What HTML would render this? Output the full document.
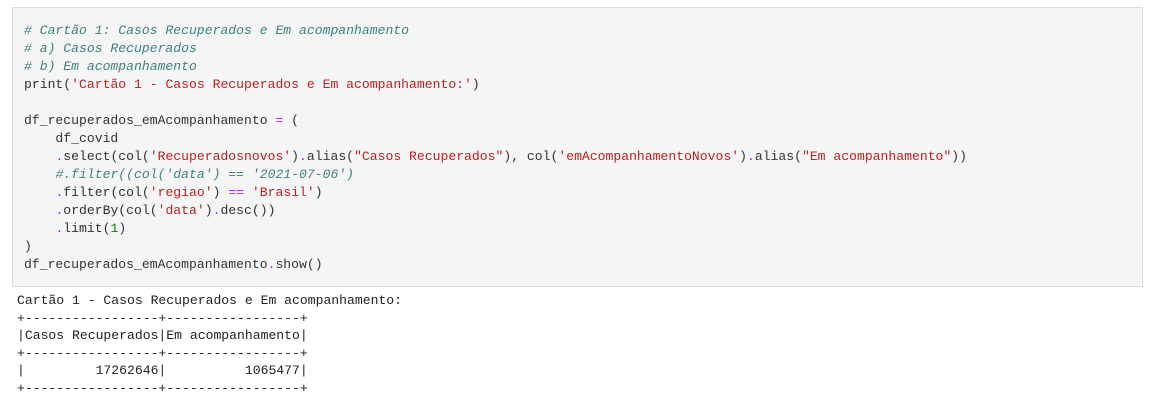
<!DOCTYPE html>
<html><head><meta charset="utf-8"><style>
html,body{margin:0;padding:0;background:#fff;width:1159px;height:403px;overflow:hidden}
pre{margin:0;font-family:"Liberation Mono",monospace;font-size:13.1px;line-height:18px;color:#333}
.box{position:absolute;left:12px;top:7px;width:1131px;height:280px;background:#f5f5f5;border:1px solid #dcdcdc;box-sizing:border-box}
.code{position:absolute;left:24px;top:22px}
.out{position:absolute;left:17px;top:292px;color:#222;line-height:17.6px}
.c{color:#408080;font-style:italic}
.s{color:#ba2121}
.o{color:#aa22ff}
.n{color:#080}
</style></head><body>
<div class="box"></div>
<pre class="code"><span class="c"># Cartão 1: Casos Recuperados e Em acompanhamento</span>
<span class="c"># a) Casos Recuperados</span>
<span class="c"># b) Em acompanhamento</span>
print(<span class="s">'Cartão 1 - Casos Recuperados e Em acompanhamento:'</span>)

df_recuperados_emAcompanhamento <span class="o">=</span> (
    df_covid
    <span class="o">.</span>select(col(<span class="s">'Recuperadosnovos'</span>)<span class="o">.</span>alias(<span class="s">"Casos Recuperados"</span>), col(<span class="s">'emAcompanhamentoNovos'</span>)<span class="o">.</span>alias(<span class="s">"Em acompanhamento"</span>))
    <span class="c">#.filter((col('data') == '2021-07-06')</span>
    <span class="o">.</span>filter(col(<span class="s">'regiao'</span>) <span class="o">==</span> <span class="s">'Brasil'</span>)
    <span class="o">.</span>orderBy(col(<span class="s">'data'</span>)<span class="o">.</span>desc())
    <span class="o">.</span>limit(<span class="n">1</span>)
)
df_recuperados_emAcompanhamento<span class="o">.</span>show()</pre>
<pre class="out">Cartão 1 - Casos Recuperados e Em acompanhamento:
+-----------------+-----------------+
|Casos Recuperados|Em acompanhamento|
+-----------------+-----------------+
|         17262646|          1065477|
+-----------------+-----------------+</pre>
</body></html>
